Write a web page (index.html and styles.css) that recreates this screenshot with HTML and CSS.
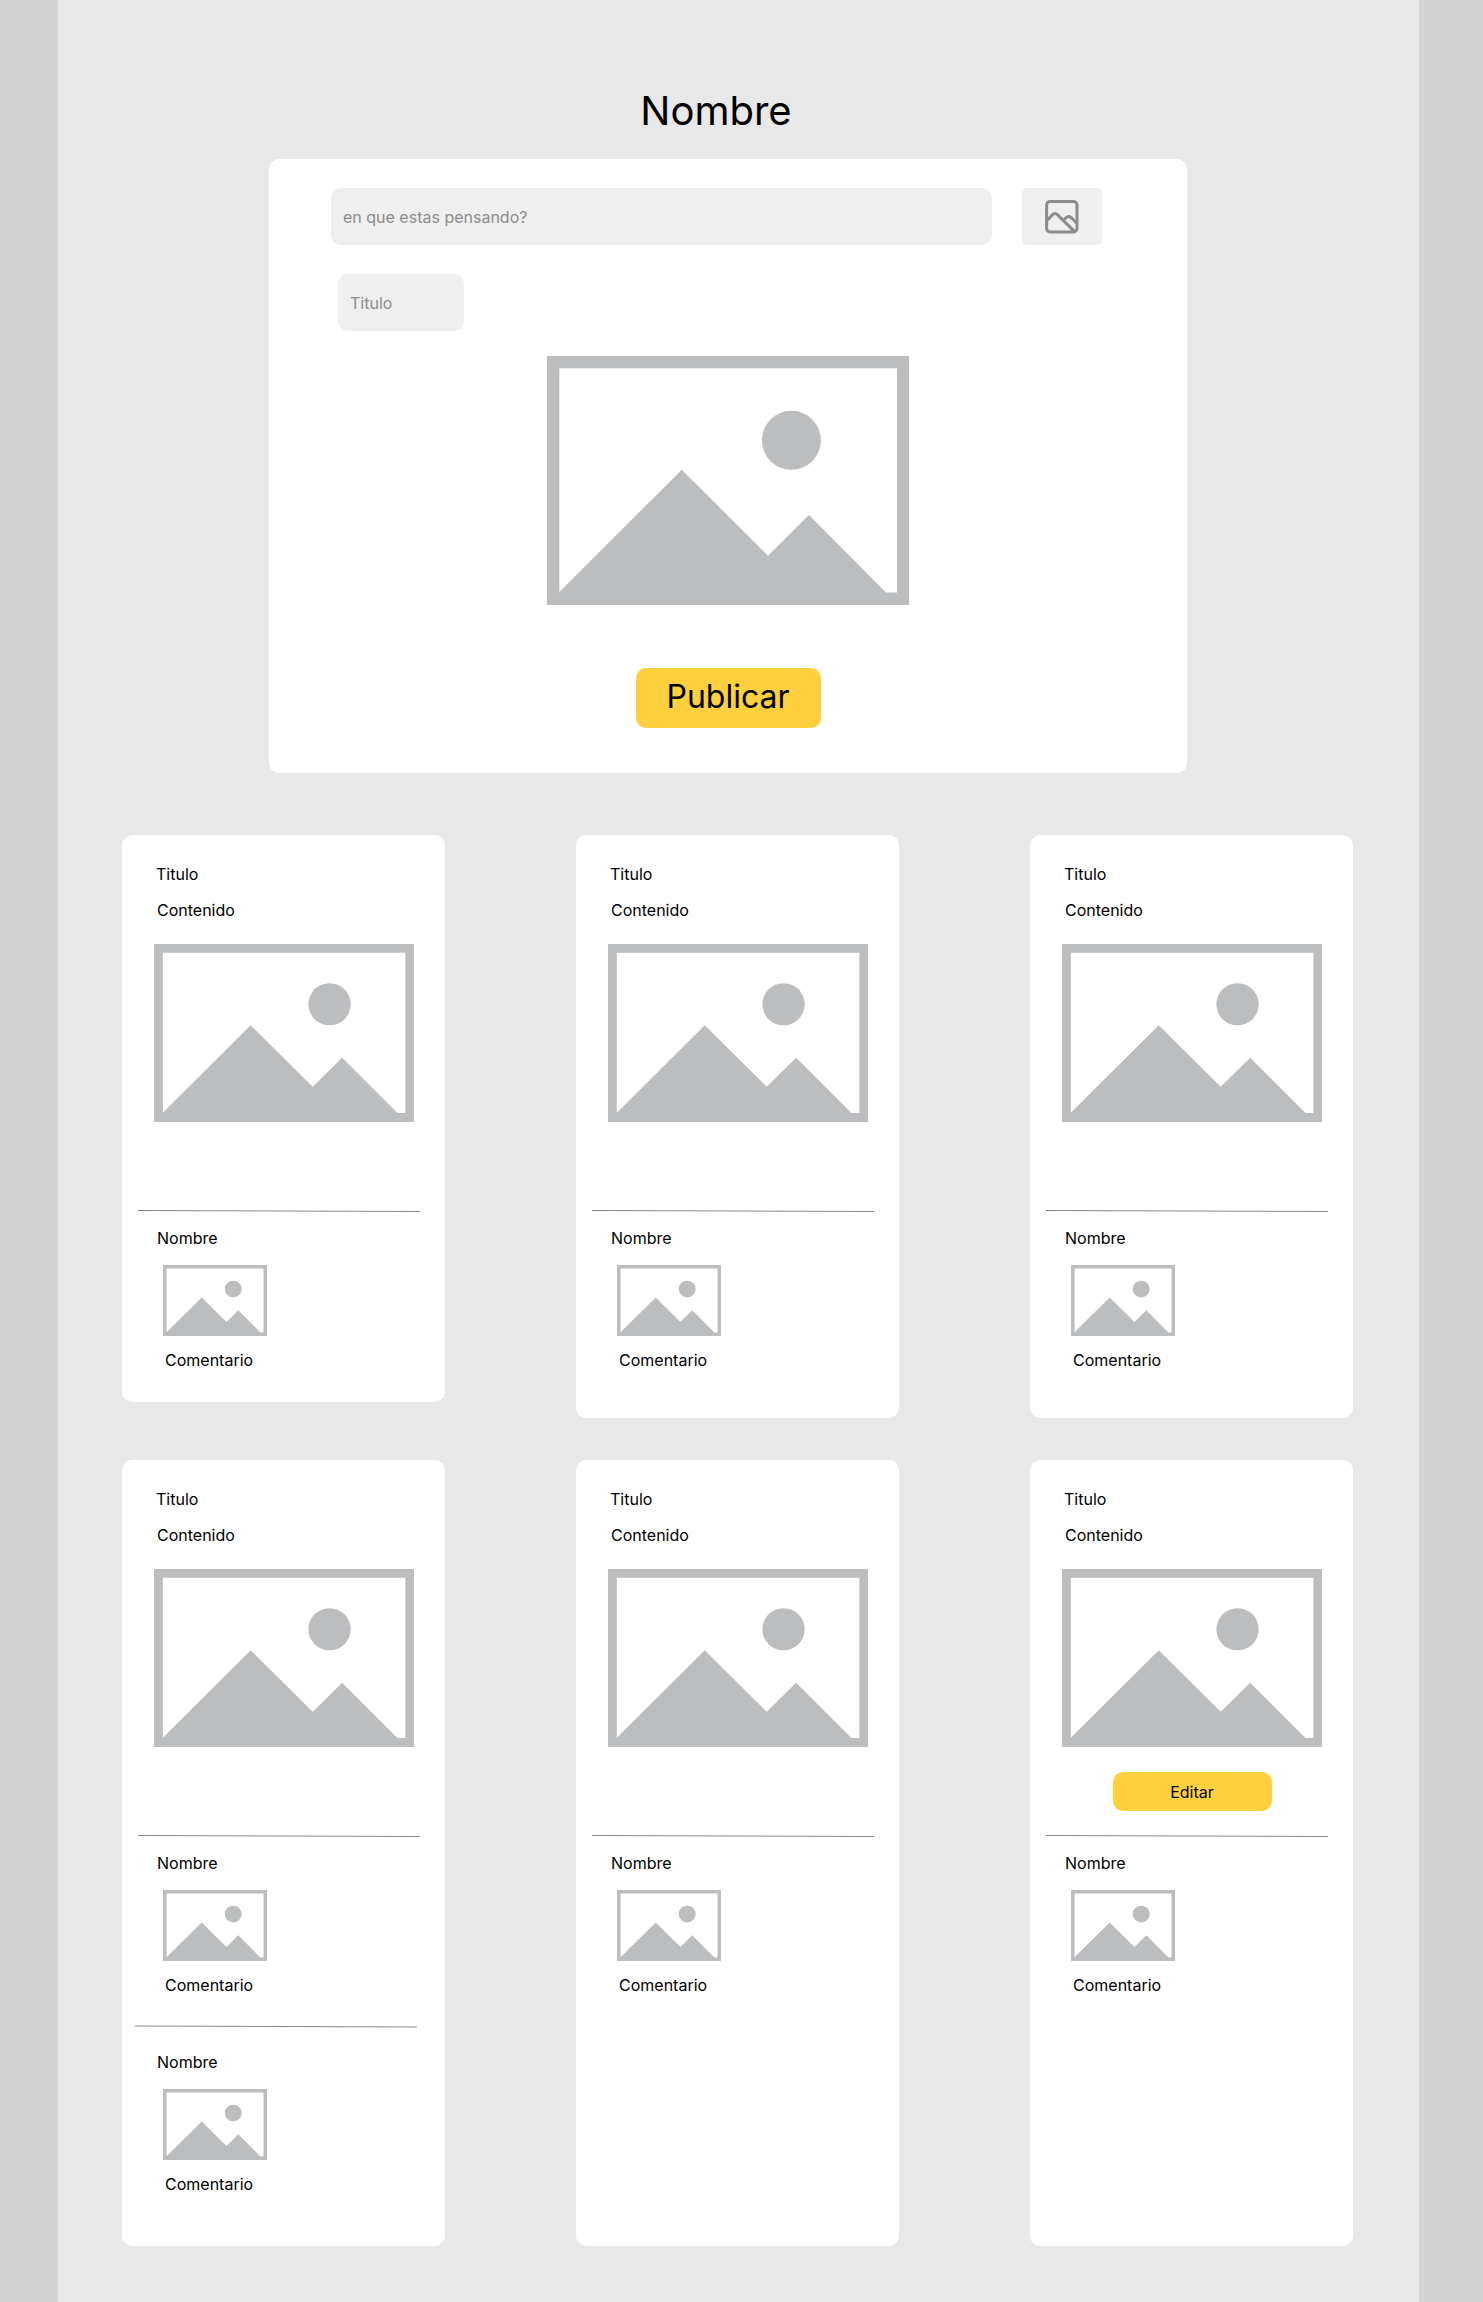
FILE: index.html
```html
<!DOCTYPE html>
<html lang="es">
<head>
<meta charset="utf-8">
<meta name="viewport" content="width=device-width, initial-scale=1">
<title>Nombre</title>
<link rel="stylesheet" href="styles.css">
</head>
<body>
<svg class="sprite" aria-hidden="true">
  <symbol id="picture" viewBox="0 0 362 249" preserveAspectRatio="none">
    <path fill-rule="evenodd" d="M0 0H362V249H0ZM12.3 12.3V236L134.7 113.7L221 199.7L262 159L339 236.5H350V12.3Z"/>
    <circle cx="244.4" cy="84.3" r="29.5"/>
  </symbol>
  <symbol id="rule" viewBox="0 0 282 3" preserveAspectRatio="none">
    <path d="M0 .5L282 1.5"/>
  </symbol>
</svg>
<main class="frame">
  <section class="profile">
    <h1 class="profile-name">Nombre</h1>
    <form class="composer">
      <div class="composer-fields">
        <div class="composer-row">
          <input class="field field-thought" type="text" placeholder="en que estas pensando?" aria-label="en que estas pensando?">
          <button class="attach" type="button" aria-label="Imagen">
            <svg class="attach-icon" viewBox="0 0 34 34" aria-hidden="true">
              <rect x="1.6" y="1.6" width="30.4" height="30.4" rx="3.4"/>
              <path d="M2 20.5L7.6 14.6Q10 12.4 12.4 14.6L29.6 31.6M18.4 20.4L20.8 17.8Q23.4 15.4 26 17.4L31.8 23.2"/>
            </svg>
          </button>
        </div>
        <input class="field field-title" type="text" placeholder="Titulo" aria-label="Titulo">
      </div>
      <svg class="preview" aria-hidden="true"><use href="#picture"/></svg>
      <button class="button button-publish" type="submit">Publicar</button>
    </form>
  </section>

  <section class="posts">
    <article class="card card-short">
      <div class="post">
        <h2 class="post-title">Titulo</h2>
        <p class="post-text">Contenido</p>
        <svg class="post-image" aria-hidden="true"><use href="#picture"/></svg>
        <div class="post-actions"></div>
      </div>
      <svg class="rule" aria-hidden="true"><use href="#rule"/></svg>
      <div class="comment">
        <h3 class="comment-name">Nombre</h3>
        <svg class="comment-image" aria-hidden="true"><use href="#picture"/></svg>
        <p class="comment-text">Comentario</p>
      </div>
    </article>

    <article class="card">
      <div class="post">
        <h2 class="post-title">Titulo</h2>
        <p class="post-text">Contenido</p>
        <svg class="post-image" aria-hidden="true"><use href="#picture"/></svg>
        <div class="post-actions"></div>
      </div>
      <svg class="rule" aria-hidden="true"><use href="#rule"/></svg>
      <div class="comment">
        <h3 class="comment-name">Nombre</h3>
        <svg class="comment-image" aria-hidden="true"><use href="#picture"/></svg>
        <p class="comment-text">Comentario</p>
      </div>
    </article>

    <article class="card">
      <div class="post">
        <h2 class="post-title">Titulo</h2>
        <p class="post-text">Contenido</p>
        <svg class="post-image" aria-hidden="true"><use href="#picture"/></svg>
        <div class="post-actions"></div>
      </div>
      <svg class="rule" aria-hidden="true"><use href="#rule"/></svg>
      <div class="comment">
        <h3 class="comment-name">Nombre</h3>
        <svg class="comment-image" aria-hidden="true"><use href="#picture"/></svg>
        <p class="comment-text">Comentario</p>
      </div>
    </article>

    <article class="card card-thread">
      <div class="post">
        <h2 class="post-title">Titulo</h2>
        <p class="post-text">Contenido</p>
        <svg class="post-image" aria-hidden="true"><use href="#picture"/></svg>
        <div class="post-actions"></div>
      </div>
      <svg class="rule" aria-hidden="true"><use href="#rule"/></svg>
      <div class="comment">
        <h3 class="comment-name">Nombre</h3>
        <svg class="comment-image" aria-hidden="true"><use href="#picture"/></svg>
        <p class="comment-text">Comentario</p>
      </div>
      <svg class="rule rule-between" viewBox="0 0 282 3" preserveAspectRatio="none" aria-hidden="true"><path d="M0 1L282 2"/></svg>
      <div class="comment comment-next">
        <h3 class="comment-name">Nombre</h3>
        <svg class="comment-image" aria-hidden="true"><use href="#picture"/></svg>
        <p class="comment-text">Comentario</p>
      </div>
    </article>

    <article class="card">
      <div class="post">
        <h2 class="post-title">Titulo</h2>
        <p class="post-text">Contenido</p>
        <svg class="post-image" aria-hidden="true"><use href="#picture"/></svg>
        <div class="post-actions"></div>
      </div>
      <svg class="rule" aria-hidden="true"><use href="#rule"/></svg>
      <div class="comment">
        <h3 class="comment-name">Nombre</h3>
        <svg class="comment-image" aria-hidden="true"><use href="#picture"/></svg>
        <p class="comment-text">Comentario</p>
      </div>
    </article>

    <article class="card">
      <div class="post">
        <h2 class="post-title">Titulo</h2>
        <p class="post-text">Contenido</p>
        <svg class="post-image" aria-hidden="true"><use href="#picture"/></svg>
        <div class="post-actions">
          <button class="button button-edit" type="button">Editar</button>
        </div>
      </div>
      <svg class="rule" aria-hidden="true"><use href="#rule"/></svg>
      <div class="comment">
        <h3 class="comment-name">Nombre</h3>
        <svg class="comment-image" aria-hidden="true"><use href="#picture"/></svg>
        <p class="comment-text">Comentario</p>
      </div>
    </article>
  </section>
</main>
</body>
</html>
```
FILE: styles.css
```css
* {
  box-sizing: border-box;
}

body {
  margin: 0;
  padding: 0 64px 0 58px;
  background: #d3d3d3;
  color: #000;
  font: 400 16px/20px Inter, "Liberation Sans", sans-serif;
}

h1, h2, h3, p {
  margin: 0;
  font-size: 16px;
  font-weight: 400;
}

svg {
  display: block;
}

.sprite {
  position: absolute;
  width: 0;
  height: 0;
}

.frame {
  min-height: 100vh;
  padding: 87px 66px 56px 64px;
  background: #e8e8e8;
}

/* Composer */

.profile {
  margin: 0 166px 62px 147px;
}

.profile-name {
  margin-bottom: 24px;
  padding-right: 24px;
  font-size: 40px;
  line-height: 48px;
  text-align: center;
}

.composer {
  display: flex;
  flex-direction: column;
  align-items: center;
  padding: 29px 0 45px;
  border-radius: 10px;
  background: #fff;
}

.composer-fields {
  display: flex;
  flex-direction: column;
  gap: 29px;
  width: 100%;
  padding: 0 85px 0 62px;
}

.composer-row {
  display: flex;
  gap: 30px;
}

.field {
  height: 57px;
  padding: 0 12px;
  border: 0;
  border-radius: 10px;
  background: #efefef;
  color: #000;
  font: inherit;
}

.field::placeholder {
  color: #8c8c8c;
  opacity: 1;
}

.field-thought {
  flex: 1;
  min-width: 0;
}

.field-title {
  width: 126px;
  margin-left: 7px;
}

.attach {
  display: grid;
  place-items: center;
  width: 80px;
  height: 57px;
  padding: 0;
  border: 0;
  border-radius: 5px;
  background: #efefef;
}

.attach-icon {
  width: 34px;
  height: 34px;
  fill: none;
  stroke: #8c8c8c;
  stroke-width: 3;
}

.preview {
  width: 362px;
  height: 249px;
  margin: 25px 0 63px;
  fill: #bbbdbf;
}

.button {
  padding: 0;
  border: 0;
  border-radius: 10px;
  background: #ffd03e;
  color: #000;
  font: inherit;
}

.button-publish {
  width: 185px;
  height: 60px;
  padding-bottom: 2px;
  font-size: 32px;
}

/* Posts */

.posts {
  display: grid;
  grid-template-columns: repeat(3, 1fr);
  gap: 42px 131px;
}

.card {
  padding: 29px 0 48px;
  border-radius: 10px;
  background: #fff;
}

.card-short {
  align-self: start;
  padding-bottom: 32px;
}

.card-thread {
  padding-bottom: 52px;
}

.post {
  padding: 0 31px 0 32px;
}

.post-title {
  margin: 0 2px 16px;
}

.post-text {
  margin: 0 3px 24px;
}

.post-image {
  width: 100%;
  height: 178px;
  fill: #bbbdbf;
}

.post-actions {
  height: 88px;
  padding-top: 25px;
}

.button-edit {
  display: block;
  width: 159px;
  height: 39px;
  margin: 0 auto;
}

.rule {
  width: calc(100% - 41px);
  height: 3px;
  margin-left: 16px;
  fill: none;
  stroke: #888;
}

.rule-between {
  margin: 30px 0 0 13px;
}

.comment {
  padding: 15px 35px 0;
}

.comment-next {
  padding-top: 24px;
}

.comment-image {
  width: 104px;
  height: 71px;
  margin: 17px 0 14px 6px;
  fill: #bbbdbf;
}

.comment-text {
  margin-left: 8px;
}
```
